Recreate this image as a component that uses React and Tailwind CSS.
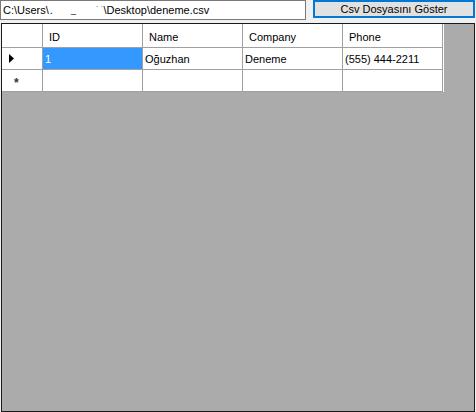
import React from 'react';

const cols = ['ID', 'Name', 'Company', 'Phone'];
const rows = [['1', 'Oğuzhan', 'Deneme', '(555) 444-2211']];

export default function App() {
  return (
    <div className="w-[476px] h-[412px] bg-[#f0f0f0] relative overflow-hidden font-['Liberation_Sans',Arial,sans-serif] text-[11px] text-black leading-none">
      {/* top bar */}
      <div className="flex items-start h-[23px]">
        <div className="w-[306px] h-[20px] bg-white border border-[#7a7a7a] flex items-center pl-[2px] whitespace-pre">
          <span>C:\Users\</span>
          <span className="ml-[1px]">.</span>
          <span className="ml-[18px] text-[9px]">_</span>
          <span className="ml-[20px] text-[8px]">˙ ˙</span>
          <span>\Desktop\deneme.csv</span>
        </div>
        <button className="ml-[7px] w-[162px] h-[18px] bg-[#e1e1e1] border-2 border-[#0078d7] flex items-center justify-center text-[11px]">
          Csv Dosyasını Göster
        </button>
      </div>

      {/* grid */}
      <div className="ml-[1px] w-[474px] h-[389px] bg-[#ababab] border border-[#1a1a1a]">
        <div className="flex flex-col w-[442px]">
          {/* header */}
          <div className="flex h-[24px] bg-white">
            <div className="w-[41px] border-r border-[#a0a0a0] border-b" />
            {cols.map((c) => (
              <div key={c} className="w-[100px] border-r border-b border-[#a0a0a0] flex items-center pl-[6px] pt-[3px]">
                {c}
              </div>
            ))}
          </div>
          {rows.map((r, i) => (
            <div key={i} className="flex h-[22px] bg-white">
              <div className="w-[41px] border-r border-b border-[#a0a0a0] flex items-center pl-[7px]">
                <svg width="5" height="9" viewBox="0 0 5 9">
                  <path d="M0 0 L5 4.5 L0 9 Z" fill="#000" />
                </svg>
              </div>
              {r.map((v, j) => (
                <div
                  key={j}
                  className={
                    j === 0
                      ? 'w-[100px] border-r border-b border-[#a0a0a0] flex items-center pl-[2px] pt-[1px] bg-[#3399ff] text-white'
                      : 'w-[100px] border-r border-b border-[#a0a0a0] flex items-center pl-[2px] pt-[1px]'
                  }
                >
                  {v}
                </div>
              ))}
            </div>
          ))}
          <div className="flex h-[22px] bg-white">
            <div className="w-[41px] border-r border-b border-[#a0a0a0] flex items-center pl-[12px]">
              <span className="text-[12px] font-bold text-[#333] mt-[4px]">*</span>
            </div>
            {cols.map((c) => (
              <div key={c} className="w-[100px] border-r border-b border-[#a0a0a0]" />
            ))}
          </div>
        </div>
      </div>
    </div>
  );
}
